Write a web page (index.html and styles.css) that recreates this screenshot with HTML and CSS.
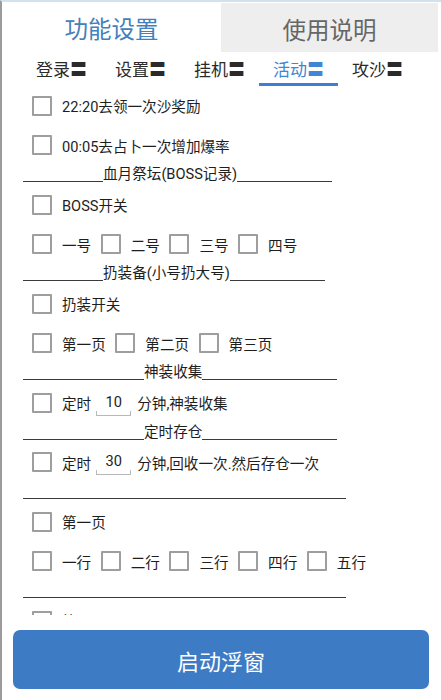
FILE: index.html
```html
<!DOCTYPE html>
<html lang="zh">
<head>
<meta charset="utf-8">
<title>功能设置</title>
<link rel="stylesheet" href="styles.css">
</head>
<body>
<div class="frame">
  <div class="tabs">
    <div class="tab tab-active">功能设置</div>
    <div class="tab tab-off">使用说明</div>
  </div>
  <div class="subtabs">
    <div class="sub">登录〓</div>
    <div class="sub">设置〓</div>
    <div class="sub">挂机〓</div>
    <div class="sub sub-active">活动〓</div>
    <div class="sub">攻沙〓</div>
  </div>
  <div class="content">
    <div class="row"><div class="item"><span class="box"></span><span>22:20去领一次沙奖励</span></div></div>
    <div class="row"><div class="item"><span class="box"></span><span>00:05去占卜一次增加爆率</span></div></div>
    <div class="divider d-a"><span class="rule rule-l"></span><span class="label">血月祭坛(BOSS记录)</span><span class="rule rule-r"></span></div>
    <div class="row"><div class="item"><span class="box"></span><span>BOSS开关</span></div></div>
    <div class="row">
      <div class="item"><span class="box"></span><span>一号</span></div>
      <div class="item"><span class="box"></span><span>二号</span></div>
      <div class="item"><span class="box"></span><span>三号</span></div>
      <div class="item"><span class="box"></span><span>四号</span></div>
    </div>
    <div class="divider d-b"><span class="rule rule-l"></span><span class="label">扔装备(小号扔大号)</span><span class="rule rule-r"></span></div>
    <div class="row"><div class="item"><span class="box"></span><span>扔装开关</span></div></div>
    <div class="row">
      <div class="item"><span class="box"></span><span>第一页</span></div>
      <div class="item"><span class="box"></span><span>第二页</span></div>
      <div class="item"><span class="box"></span><span>第三页</span></div>
    </div>
    <div class="divider d-c"><span class="rule rule-l"></span><span class="label">神装收集</span><span class="rule rule-r"></span></div>
    <div class="row"><div class="item"><span class="box"></span><span>定时</span><span class="field">10</span><span>分钟,神装收集</span></div></div>
    <div class="divider d-c"><span class="rule rule-l"></span><span class="label">定时存仓</span><span class="rule rule-r"></span></div>
    <div class="row"><div class="item"><span class="box"></span><span>定时</span><span class="field">30</span><span>分钟,回收一次.然后存仓一次</span></div></div>
    <div class="divider d-full"><span class="rule rule-r"></span></div>
    <div class="row"><div class="item"><span class="box"></span><span>第一页</span></div></div>
    <div class="row">
      <div class="item"><span class="box"></span><span>一行</span></div>
      <div class="item"><span class="box"></span><span>二行</span></div>
      <div class="item"><span class="box"></span><span>三行</span></div>
      <div class="item"><span class="box"></span><span>四行</span></div>
      <div class="item"><span class="box"></span><span>五行</span></div>
    </div>
    <div class="divider d-full"><span class="rule rule-r"></span></div>
    <div class="row"><div class="item"><span class="box"></span><span>第一页</span></div></div>
  </div>
  <div class="footer">
    <button class="start">启动浮窗</button>
  </div>
</div>
</body>
</html>
```
FILE: styles.css
```css
html, body {
  margin: 0;
  padding: 0;
  background: #ffffff;
}
body {
  width: 441px;
  height: 700px;
  overflow: hidden;
  font-family: Roboto, "Noto Sans CJK SC", sans-serif;
  color: #1e1e1e;
}
.frame {
  box-sizing: border-box;
  height: 700px;
  border-left: 2px solid #9b9b9b;
  border-top: 2px solid #d2e1ec;
  display: flex;
  flex-direction: column;
}
.tabs {
  display: grid;
  grid-template-columns: 219px 1fr;
  height: 50px;
  flex: none;
}
.tab {
  display: flex;
  align-items: center;
  justify-content: center;
  font-size: 23.5px;
  padding-top: 2px;
  box-sizing: border-box;
}
.tab-active {
  color: #4480ba;
}
.tab-off {
  color: #666666;
  background: #eeeeee;
  margin-right: 3px;
  margin-top: 1px;
}
.subtabs {
  flex: none;
  display: grid;
  grid-template-columns: repeat(5, 79px);
  margin-left: 20px;
  height: 34px;
}
.sub {
  box-sizing: border-box;
  padding-top: 5px;
  height: 34px;
  line-height: 26px;
  text-align: center;
  font-size: 17px;
  color: #2a2a2a;
  border-bottom: 3px solid transparent;
}
.sub-active {
  color: #4285d2;
  border-bottom-color: #3f7fd0;
}
.content {
  flex: none;
  height: 529px;
  overflow: hidden;
  padding-left: 21px;
  font-size: 14.6px;
}
.row {
  display: flex;
  align-items: center;
  height: 39.5px;
  padding-left: 9px;
}
.item {
  display: flex;
  align-items: center;
  margin-right: 9.5px;
  white-space: nowrap;
}
.box {
  box-sizing: border-box;
  width: 20px;
  height: 20px;
  border: 2px solid #9e9e9e;
  border-radius: 1px;
  margin-right: 10px;
  flex: none;
}
.field {
  box-sizing: border-box;
  width: 35px;
  height: 26px;
  line-height: 25px;
  text-align: center;
  margin: 0 6px 0 5px;
  border-bottom: 1px solid #b8b8b8;
  background:
    linear-gradient(#b8b8b8, #b8b8b8) left bottom / 1px 4px no-repeat,
    linear-gradient(#b8b8b8, #b8b8b8) right bottom / 1px 4px no-repeat;
}
.divider {
  display: flex;
  align-items: flex-start;
  height: 20px;
}
.rule {
  height: 1px;
  margin-top: 16px;
  background: #3a3a3a;
}
.rule-r {
  flex: 1;
}
.label {
  line-height: 17px;
  margin-top: 1px;
  white-space: nowrap;
}
.d-a { width: 309px; }
.d-a .rule-l { width: 80px; }
.d-b { width: 302px; }
.d-b .rule-l { width: 80px; }
.d-c { width: 314px; }
.d-c .rule-l { width: 121px; }
.d-full { width: 323px; }
.footer {
  flex: 1;
  display: flex;
  padding: 15px 12px 11px 11px;
}
.start {
  flex: 1;
  height: 59px;
  border: none;
  border-radius: 7px;
  background: #3d7bc4;
  color: #ffffff;
  font-family: Roboto, "Noto Sans CJK SC", sans-serif;
  font-size: 22px;
  padding: 0;
}
```
